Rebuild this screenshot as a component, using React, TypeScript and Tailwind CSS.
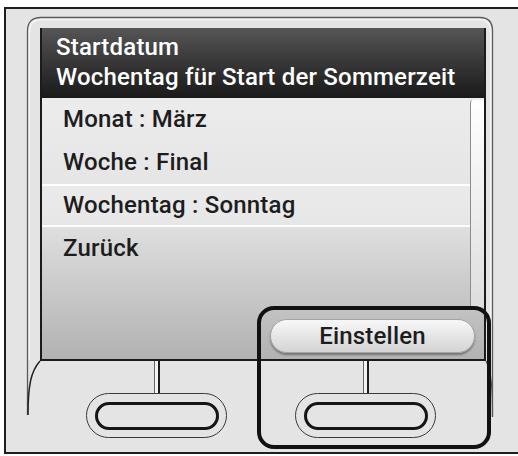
import React from 'react';

const font = { fontFamily: 'Roboto, "Liberation Sans", sans-serif' };

// Hardware key under the display: a stem and a double-outlined stadium
const HardKey = () => (
  <div className="flex flex-col items-center w-[141px]">
    <div className="w-[6px] h-[32px] border-l border-r-2 border-l-[#666] border-r-[#1c1c1c] bg-[#f2f2f2]" />
    <div className="w-[141px] h-[45px] rounded-full border border-[#3a3a3a] flex items-center justify-center">
      <div className="w-[124px] h-[28px] rounded-full border-[3px] border-[#151515]" />
    </div>
  </div>
);

const MenuRow = ({ label, selected }: { label: string; selected?: boolean }) => (
  <div
    className={
      'h-[43px] pl-[21px] text-[24px] tracking-[0.2px] font-medium text-[#1d1d1d] ' +
      (selected ? 'leading-[39px] border-y-2 border-white bg-white/20' : 'leading-[43px]')
    }
  >
    {label}
  </div>
);

export default function App() {
  return (
    <div className="w-[518px] h-[456px] bg-white overflow-hidden relative" style={font}>
      <div className="ml-[4px] mt-[7px] w-[520px] h-[447px] border-2 border-[#1e1e1e] bg-[#e4e4e4] relative">
        {/* bezel lines */}
        <svg className="absolute left-[-6px] top-[-9px] pointer-events-none" width="518" height="456">
          <path d="M27.5 415 L27.5 31 Q27.5 17.5 41 17.5 L480 17.5 Q492.5 17.5 492.5 31 L492.5 417" fill="none" stroke="#5a5a5a" strokeWidth="1.3" />
          <path d="M29.5 360 L29.5 32 Q29.5 19.5 42 19.5 L479 19.5 Q490.5 19.5 490.5 32 L490.5 360" fill="none" stroke="#f4f4f4" strokeWidth="1.5" />
          <path d="M40 361 C31 371 28 385 28 415" fill="none" stroke="#222" strokeWidth="1.5" />
          <path d="M486 361 C491 371 492.5 385 492.5 417" fill="none" stroke="#555" strokeWidth="1.2" />
        </svg>

        {/* display */}
        <div className="relative ml-[34px] mt-[19px] w-[446px] h-[333px] border-x-2 border-b-2 border-[#1b1b1b] flex flex-col">
          <div className="h-[70px] bg-linear-to-b from-[#565656] to-[#1a1a1a] pl-[14px] pt-[4px] text-white text-[24px] tracking-[0.2px] leading-[30px] font-medium">
            <div>Startdatum</div>
            <div>Wochentag für Start der Sommerzeit</div>
          </div>
          <div className="flex-1 flex flex-col bg-linear-to-b from-[#ececec] via-[#e3e3e3] via-45% to-[#b2b2b2]">
            <div className="h-[209px] flex">
              <div className="flex-1">
                <MenuRow label="Monat : März" />
                <MenuRow label="Woche : Final" />
                <MenuRow label="Wochentag : Sonntag" selected />
                <MenuRow label="Zurück" />
              </div>
              <div className="w-[14px] mt-[2px] border-l border-[#8c8c8c] rounded-tl-[3px] bg-linear-to-b from-white to-[#dedede]" />
            </div>
            <div className="flex justify-end pr-[9px] pt-[12px]">
              <div className="w-[205px] h-[34px] rounded-full border border-[#a5a5a5] bg-linear-to-b from-[#f8f8f8] to-[#d4d4d4] shadow-[0_2px_2px_rgba(0,0,0,0.35)] flex items-center justify-center text-[24px] tracking-[0.2px] font-medium text-[#1d1d1d]">
                Einstellen
              </div>
            </div>
          </div>
        </div>

        {/* hard keys */}
        <div className="flex ml-[80px] gap-[68px]">
          <HardKey />
          <HardKey />
        </div>
      </div>

      {/* highlight round the right soft key */}
      <div className="absolute left-[257px] top-[306px] w-[234px] h-[143px] border-4 border-[#111] rounded-[17px] pointer-events-none" />
    </div>
  );
}
